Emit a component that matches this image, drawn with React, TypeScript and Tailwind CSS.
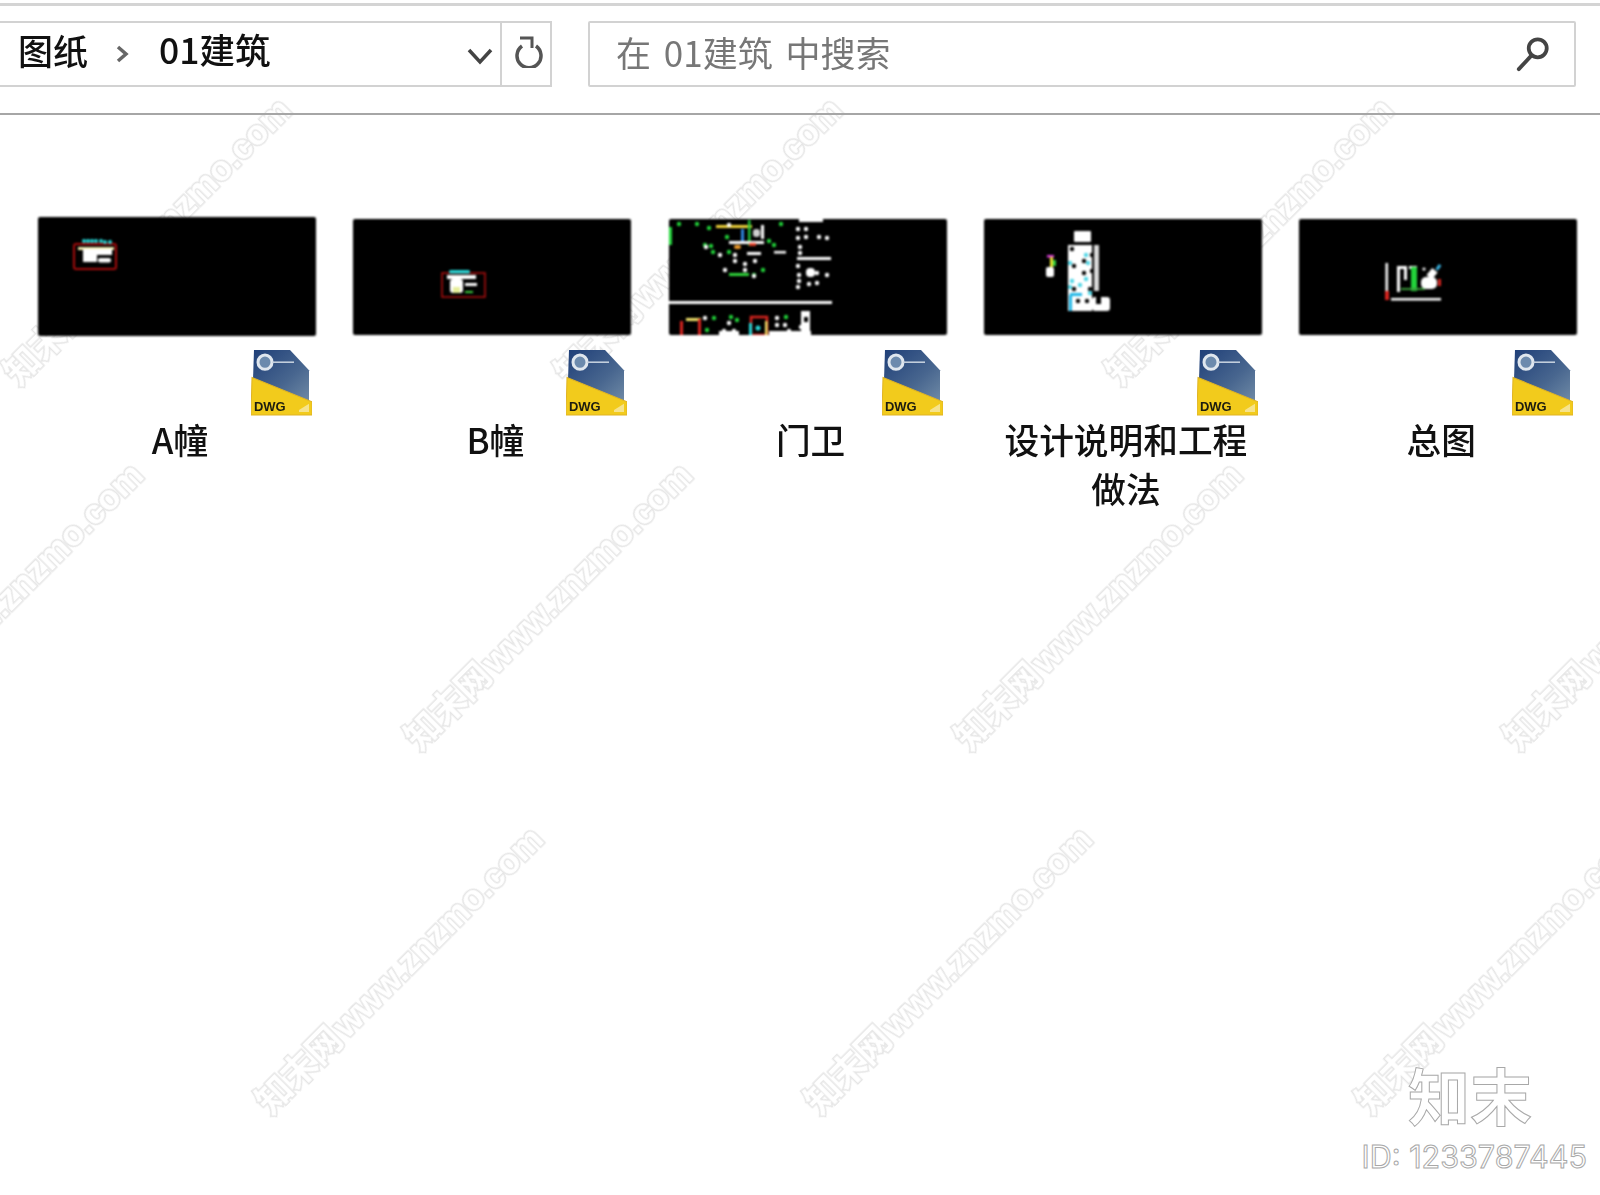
import React from 'react';

const FONT = "font-['Noto_Sans_CJK_SC','Noto_Sans',sans-serif]";

const MARKS = [
  'left-[10px] top-[378px]',
  'left-[561px] top-[378px]',
  'left-[1112px] top-[378px]',
  'left-[-138px] top-[743px]',
  'left-[411px] top-[743px]',
  'left-[961px] top-[743px]',
  'left-[1510px] top-[743px]',
  'left-[262px] top-[1107px]',
  'left-[811px] top-[1107px]',
  'left-[1362px] top-[1107px]',
];

const Dots = ({ fill, pts, r = 2.2 }: { fill: string; pts: number[][]; r?: number }) => (
  <>
    {pts.map(([x, y], i) => (
      <circle key={i} cx={x} cy={y} r={r} fill={fill} />
    ))}
  </>
);

const ThumbA = () => (
  <>
    <rect x="36" y="27" width="42" height="25" rx="2" fill="none" stroke="#a80c0c" strokeWidth="2" />
    <Dots fill="#27d6d6" pts={[[46, 24], [50, 24], [54, 24], [58, 24], [63, 24], [67, 25], [72, 25]]} r={2} />
    <rect x="40" y="30" width="36" height="3" fill="#f3ecb0" />
    <rect x="45" y="32" width="29" height="6" fill="#fff" />
    <rect x="45" y="38" width="14" height="7" fill="#fff" />
    <rect x="60" y="41" width="13" height="4.5" rx="2" fill="#fff" />
  </>
);

const ThumbB = () => (
  <>
    <rect x="89" y="54" width="43" height="24" fill="none" stroke="#b50f0f" strokeWidth="1.5" />
    <rect x="96" y="51" width="21" height="3.5" rx="1.5" fill="#27d6d6" />
    <rect x="94" y="56" width="29" height="4" fill="#fff" />
    <rect x="97" y="60" width="13" height="14" rx="3" fill="#fff" />
    <rect x="100" y="68" width="7" height="6" fill="#e6ee9a" />
    <rect x="112" y="64" width="12" height="3" fill="#fff" />
    <rect x="112" y="72" width="8" height="2" fill="#3fcf3f" />
  </>
);

const ThumbC = () => (
  <>
    <rect x="0" y="8" width="3" height="18" fill="#22d33a" />
    <Dots fill="#22d33a" pts={[[10, 5], [28, 5], [40, 9], [112, 5], [36, 26], [42, 27], [105, 26], [60, 33], [94, 51], [85, 56], [44, 33], [58, 18], [100, 22]]} />
    <rect x="47" y="6" width="36" height="3" fill="#f0d43a" />
    <rect x="79" y="1" width="2.5" height="26" fill="#22c43a" />
    <rect x="72" y="10" width="3" height="12" fill="#2f86e0" />
    <rect x="60" y="22" width="35" height="3" fill="#fff" />
    <rect x="65" y="26" width="7" height="4" rx="2" fill="#ec9a2a" />
    <rect x="80" y="24" width="7" height="3" fill="#e2402a" />
    <rect x="84" y="10" width="7" height="8" rx="3" fill="#cfcfcf" />
    <rect x="92" y="6" width="3" height="14" fill="#fff" />
    <rect x="78" y="33" width="14" height="3" fill="#fff" />
    <rect x="105" y="32" width="12" height="2.5" fill="#fff" />
    <rect x="60" y="54" width="20" height="3" fill="#2fd43a" />
    <Dots fill="#fff" pts={[[51, 36], [66, 36], [66, 42], [76, 45], [86, 42], [56, 51], [76, 51], [85, 57], [60, 6], [37, 28]]} />
    {/* right column */}
    <rect x="130" y="0" width="24" height="3" fill="#fff" />
    <rect x="128" y="38" width="34" height="3" fill="#fff" />
    <Dots fill="#fff" pts={[[129, 10], [137, 10], [129, 19], [137, 18], [150, 18], [158, 19], [131, 28], [131, 34], [129, 47], [130, 56], [130, 62], [129, 68], [140, 65], [148, 64], [158, 56], [148, 54]]} />
    <rect x="137" y="49" width="9" height="9" rx="4" fill="#fff" />
    <rect x="0" y="82" width="163" height="3" fill="#fff" />
    {/* bottom strip */}
    <rect x="11" y="102" width="3" height="14" fill="#d8241f" />
    <rect x="17" y="99" width="15" height="3" fill="#f2e36a" />
    <rect x="29" y="100" width="3" height="16" fill="#d8241f" />
    <rect x="82" y="98" width="16" height="18" fill="none" stroke="#d8241f" strokeWidth="2.5" />
    <rect x="80" y="104" width="3" height="12" fill="#27d6d6" />
    <rect x="96" y="102" width="2.5" height="14" fill="#f2e36a" />
    <circle cx="89" cy="109" r="2.5" fill="#27d6d6" />
    <Dots fill="#22d33a" pts={[[45, 99], [62, 98], [68, 101], [117, 98], [38, 111]]} />
    <Dots fill="#fff" pts={[[36, 99], [60, 104], [55, 112], [65, 112], [108, 99], [108, 106], [116, 106], [120, 112], [132, 108]]} />
    <rect x="50" y="112" width="20" height="4" fill="#fff" />
    <rect x="100" y="112" width="42" height="4" fill="#fff" />
    <rect x="132" y="92" width="9" height="20" fill="#fff" />
    <rect x="135" y="98" width="4" height="5" fill="#000" />
  </>
);

const ThumbD = () => (
  <>
    <rect x="90" y="12" width="17" height="11" rx="1" fill="#fff" />
    <rect x="84" y="26" width="24" height="66" fill="#fff" />
    <rect x="110" y="26" width="5" height="46" fill="#fff" opacity=".85" />
    <rect x="108" y="78" width="18" height="14" rx="3" fill="#fff" />
    <rect x="112" y="78" width="5" height="7" fill="#000" />
    <rect x="86" y="74" width="12" height="3" fill="#1fb6e6" />
    <rect x="85" y="76" width="3" height="16" fill="#1fb6e6" />
    <Dots fill="#000" pts={[[88, 30], [100, 42], [90, 47], [100, 54], [90, 70], [106, 70], [94, 82], [103, 82], [108, 36], [108, 52]]} />
    <Dots fill="#4fd6e6" pts={[[102, 36], [104, 44], [86, 44], [88, 62], [102, 60], [96, 66], [86, 68], [106, 74]]} />
    <rect x="63" y="36" width="7" height="2.5" fill="#e040e0" />
    <rect x="66" y="38" width="3" height="10" fill="#e6e030" />
    <rect x="69" y="41" width="3" height="6" fill="#30d040" />
    <rect x="62" y="48" width="8" height="10" rx="2" fill="#fff" />
  </>
);

const ThumbE = () => (
  <>
    <rect x="86.5" y="44" width="2.5" height="37" fill="#fff" />
    <rect x="86" y="72" width="4" height="9" fill="#d8241f" />
    <rect x="92" y="79" width="50" height="2.5" fill="#fff" />
    <rect x="98" y="47" width="3" height="26" fill="#fff" />
    <rect x="98" y="47" width="9" height="3" fill="#fff" />
    <rect x="105" y="47" width="3" height="14" fill="#fff" />
    <rect x="110" y="47" width="8" height="3" fill="#fff" />
    <rect x="112" y="48" width="6" height="24" fill="#22d33a" />
    <rect x="102" y="69" width="24" height="2" fill="#3a9a3a" />
    <rect x="122" y="58" width="16" height="12" rx="5" fill="#fff" />
    <rect x="130" y="50" width="7" height="9" fill="#fff" transform="rotate(40 133 54)" />
    <rect x="138" y="45" width="3" height="6" fill="#3ab6e6" transform="rotate(35 139 48)" />
    <rect x="139" y="60" width="3" height="7" fill="#d8241f" />
    <circle cx="125" cy="50" r="1.6" fill="#fff" />
  </>
);

const items = [
  { name: 'A幢', h: 'h-[119px]', thumb: <ThumbA /> },
  { name: 'B幢', h: 'h-[116px]', thumb: <ThumbB /> },
  { name: '门卫', h: 'h-[116px]', thumb: <ThumbC /> },
  { name: '设计说明和工程做法', h: 'h-[116px]', thumb: <ThumbD /> },
  { name: '总图', h: 'h-[116px]', thumb: <ThumbE /> },
];

const DwgIcon = ({ id }: { id: string }) => (
  <svg width="61" height="67" viewBox="0 0 61 66" preserveAspectRatio="none" className="blur-[0.7px]">
    <defs>
      <linearGradient id={`b${id}`} x1="0" y1="0" x2="1" y2="1">
        <stop offset="0" stopColor="#1f3f78" />
        <stop offset=".6" stopColor="#48668f" />
        <stop offset="1" stopColor="#6f8aa6" />
      </linearGradient>
    </defs>
    <path d="M3 1H39L58 21V52L2 30Z" fill={`url(#b${id})`} />
    <circle cx="14" cy="13" r="7" fill="#6c8aad" stroke="#dfe6ee" strokeWidth="3" />
    <path d="M21 13H43" stroke="#c9d4e0" strokeWidth="1.5" />
    <path d="M1 28L61 52V65H0Z" fill="#f2cb1c" stroke="#e0b424" strokeWidth="1" />
    <path d="M48 60L58 54V62H48Z" fill="#f6e38c" />
    <text x="3" y="61" fontSize="13" fontWeight="700" fill="#1c1c10" fontFamily="'Liberation Sans',sans-serif">DWG</text>
  </svg>
);

export default function App() {
  return (
    <div className={`relative h-[1195px] w-[1600px] overflow-hidden bg-white ${FONT}`}>
      {/* watermark layer */}
      <div className="absolute inset-0">
        {MARKS.map(pos => (
          <div
            key={pos}
            className={`absolute ${pos} origin-left -translate-y-1/2 -rotate-45 whitespace-nowrap font-['Liberation_Sans','Noto_Sans_CJK_SC',sans-serif] text-[35px] leading-none font-bold [word-spacing:-7px] text-white blur-[0.5px] [-webkit-text-stroke:3px_#e6e6e6] [paint-order:stroke_fill]`}
          >
            知末网 www.znzmo.com
          </div>
        ))}
      </div>

      <div className="relative flex flex-col">
        <div className="h-[6px] border-b-[3px] border-[#d4d4d4]" />

        <div className="flex h-[109px] items-start border-b-2 border-[#a6a6a6] pt-[15px]">
          <div className="flex h-[66px] w-[552px] items-center border-y-2 border-r-2 border-[#d2d2d2]">
            <div className="flex flex-1 items-center blur-[0.5px]">
              <span className="mb-[10px] ml-[18px] text-[35px] leading-none font-medium text-[#111]">图纸</span>
              <svg width="14" height="20" viewBox="0 0 14 20" className="ml-[28px]" fill="none" stroke="#666" strokeWidth="3.5">
                <path d="M2 3L10 10L2 17" />
              </svg>
              <span className="mb-[10px] ml-[29px] text-[35.5px] leading-none font-medium text-[#111]">01建筑</span>
            </div>
            <svg width="26" height="18" viewBox="0 0 26 18" className="mr-[7px] mt-[4px] blur-[0.4px]" fill="none" stroke="#444" strokeWidth="3.5">
              <path d="M2 3L13 15L24 3" />
            </svg>
            <div className="flex h-full w-[50px] items-center justify-center border-l-2 border-[#d2d2d2] pb-[4px] pl-[5px]">
              <svg width="28" height="32" viewBox="0 0 28 32" className="blur-[0.4px]" fill="none" stroke="#555" strokeWidth="3.5">
                <path d="M7 10A12 12 0 1 0 21 10" />
                <path d="M5 2H17V12" strokeWidth="3" />
              </svg>
            </div>
          </div>

          <div className="ml-[36px] flex h-[66px] w-[988px] items-center justify-between rounded-[2px] border-2 border-[#d2d2d2] pl-[26px] pr-[23px]">
            <span className="mb-[6px] text-[35px] leading-none text-[#777] [word-spacing:5px] blur-[0.5px]">在 01建筑 中搜索</span>
            <svg width="36" height="36" viewBox="0 0 36 38" className="blur-[0.4px]" fill="none" stroke="#444">
              <circle cx="23" cy="13" r="9.5" strokeWidth="4" />
              <path d="M16 21L3 35" strokeWidth="4" strokeLinecap="round" />
            </svg>
          </div>
        </div>

        <div className="grid grid-cols-[repeat(5,278px)] gap-x-[37.3px] pl-[38px] pt-[102px]">
          {items.map((it, i) => (
            <div key={it.name} className="flex flex-col">
              <div className="flex h-[119px] items-center">
                <svg viewBox={it.h === 'h-[119px]' ? '0 0 278 119' : '0 0 278 116'} className={`w-full ${it.h} rounded-[2px] bg-black blur-[0.8px]`}>
                  {it.thumb}
                </svg>
              </div>
              <div className="mt-[13px] flex justify-end pr-[4px]">
                <DwgIcon id={String(i)} />
              </div>
              <div className="-mt-[1px] pl-[6px] text-center text-[34.7px] leading-[49px] font-medium text-[#111] blur-[0.5px]">
                {it.name}
              </div>
            </div>
          ))}
        </div>
      </div>

      {/* brand stamp */}
      <div className="absolute bottom-[20px] right-[13px] flex flex-col items-end text-white [-webkit-text-stroke:1px_#a8a8a8]">
        <div className="mr-[55px] text-[62px] leading-[74px] font-bold">知末</div>
        <div className="mt-[8px] font-['Inter',sans-serif] text-[30.5px] leading-[36px]">ID: 1233787445</div>
      </div>
    </div>
  );
}
